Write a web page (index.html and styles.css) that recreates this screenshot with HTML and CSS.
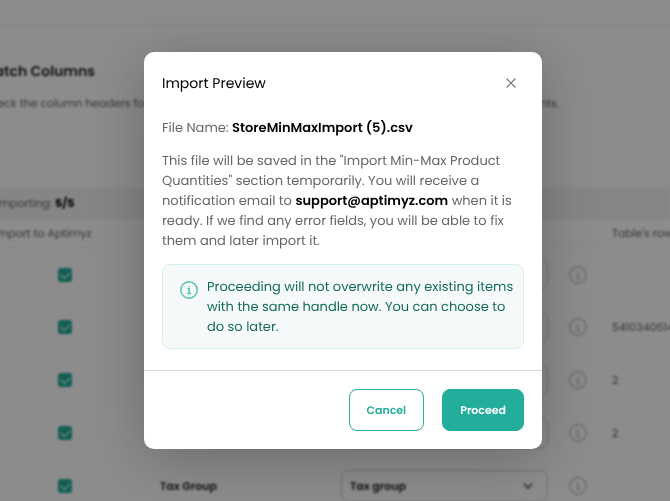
FILE: index.html
```html
<!DOCTYPE html>
<html lang="en">
<head>
  <meta charset="UTF-8">
  <meta name="viewport" content="width=device-width, initial-scale=1.0">
  <title>Import Preview</title>
  <link rel="stylesheet" href="styles.css">
</head>
<body>

  <!-- Page behind the dialog -->
  <div class="page">
    <header class="topbar"></header>

    <div class="intro">
      <h1>Match Columns</h1>
      <div class="intro-text">
        <p>Check the column headers for</p>
        <p class="intro-end">nts.</p>
      </div>
    </div>

    <p class="summary">Importing: <strong>5/5</strong></p>

    <table class="columns-table">
      <colgroup>
        <col class="col-check">
        <col class="col-name">
        <col class="col-select">
        <col class="col-info">
        <col>
      </colgroup>
      <thead>
        <tr>
          <th>Import to Aptimyz</th>
          <th></th>
          <th></th>
          <th></th>
          <th>Table's row</th>
        </tr>
      </thead>
      <tbody>
        <tr>
          <td class="center"><input type="checkbox" aria-label="Import column 1" checked></td>
          <td></td>
          <td><div class="select-wrap"><select aria-label="Match for column 1"></select></div></td>
          <td class="center"><svg class="row-info" viewBox="0 0 18 18"><use href="#info"/></svg></td>
          <td></td>
        </tr>
        <tr>
          <td class="center"><input type="checkbox" aria-label="Import column 2" checked></td>
          <td></td>
          <td><div class="select-wrap"><select aria-label="Match for column 2"></select></div></td>
          <td class="center"><svg class="row-info" viewBox="0 0 18 18"><use href="#info"/></svg></td>
          <td>5410340614</td>
        </tr>
        <tr>
          <td class="center"><input type="checkbox" aria-label="Import column 3" checked></td>
          <td></td>
          <td><div class="select-wrap"><select aria-label="Match for column 3"></select></div></td>
          <td class="center"><svg class="row-info" viewBox="0 0 18 18"><use href="#info"/></svg></td>
          <td>2</td>
        </tr>
        <tr>
          <td class="center"><input type="checkbox" aria-label="Import column 4" checked></td>
          <td></td>
          <td><div class="select-wrap"><select aria-label="Match for column 4"></select></div></td>
          <td class="center"><svg class="row-info" viewBox="0 0 18 18"><use href="#info"/></svg></td>
          <td>2</td>
        </tr>
        <tr>
          <td class="center"><input type="checkbox" aria-label="Import Tax Group" checked></td>
          <td><label class="name" for="tax-select">Tax Group</label></td>
          <td>
            <div class="select-wrap">
              <select id="tax-select">
                <option>Tax group</option>
              </select>
              <svg class="chevron" viewBox="0 0 10 10"><path d="M1 3l4 4 4-4"/></svg>
            </div>
          </td>
          <td class="center"><svg class="row-info" viewBox="0 0 18 18"><use href="#info"/></svg></td>
          <td></td>
        </tr>
      </tbody>
    </table>
  </div>

  <!-- Import preview dialog -->
  <div class="overlay">
    <div class="modal" role="dialog" aria-modal="true" aria-labelledby="modal-title">
      <div class="modal-header">
        <h2 id="modal-title">Import Preview</h2>
        <button class="close" type="button" aria-label="Close">
          <svg viewBox="0 0 10 10"><path d="M.5.5l9 9M9.5.5l-9 9"/></svg>
        </button>
      </div>

      <div class="modal-body">
        <p>File Name: <strong>StoreMinMaxImport (5).csv</strong></p>
        <p>
          This file will be saved in the "Import Min-Max Product<br>
          Quantities" section temporarily. You will receive a<br>
          notification email to <strong>support@aptimyz.com</strong> when it is<br>
          ready. If we find any error fields, you will be able to fix<br>
          them and later import it.
        </p>
        <div class="notice">
          <svg class="notice-icon" viewBox="0 0 18 18">
            <g id="info">
              <circle cx="9" cy="9" r="8.2"/>
              <path d="M7.4 7.8h1.8v4.6M7.2 12.5h4M9 5v1.3"/>
            </g>
          </svg>
          <p>
            Proceeding will not overwrite any existing items<br>
            with the same handle now. You can choose to<br>
            do so later.
          </p>
        </div>
      </div>

      <div class="modal-footer">
        <button class="btn btn-outline" type="button">Cancel</button>
        <button class="btn btn-primary" type="button">Proceed</button>
      </div>
    </div>
  </div>

</body>
</html>
```

FILE: styles.css
```css
* {
  box-sizing: border-box;
  margin: 0;
  padding: 0;
}

body {
  font-family: 'Poppins', 'Inter', sans-serif;
  font-size: 13px;
  line-height: 20px;
  text-rendering: geometricPrecision;
  color: #666;
  background-color: #fff;
  height: 100vh;
  overflow: hidden;
}

button,
select {
  font-family: inherit;
  text-rendering: inherit;
}

/* Page */
.page {
  margin-left: -18px;
  font-size: 11px;
  filter: blur(1px);
}

.topbar {
  height: 26px;
  border-bottom: 1px solid #dff5f2;
}

.intro {
  padding: 35px 0 74px;
}

.intro h1 {
  font-size: 14px;
  line-height: 20px;
  font-weight: 600;
  color: #222;
  margin-bottom: 12px;
}

.intro-text {
  display: grid;
  grid-template-columns: 558px 1fr;
}

.summary {
  background-color: #f3f3f3;
  padding: 6px 14px 7px;
}

.summary strong {
  font-weight: 700;
  color: #000;
}

.columns-table {
  width: 100%;
  table-layout: fixed;
  border-collapse: collapse;
}

.col-check {
  width: 166px;
}

.col-name {
  width: 187px;
}

.col-select {
  width: 219px;
}

.col-info {
  width: 48px;
}

.columns-table th {
  height: 27px;
  padding-left: 12px;
  font-weight: 400;
  text-align: left;
  white-space: nowrap;
  border-bottom: 1px solid #f6f6f6;
}

.columns-table td {
  height: 53px;
  padding: 0 6px 0 12px;
  vertical-align: middle;
}

.columns-table th:last-child,
.columns-table td:last-child {
  padding: 0 0 0 10px;
}

.columns-table td:nth-child(3) {
  padding: 0 6px;
}

.columns-table td.center {
  padding: 0;
  text-align: center;
}

.columns-table svg {
  vertical-align: middle;
}

input[type="checkbox"] {
  appearance: none;
  width: 14px;
  height: 14px;
  border-radius: 3px;
  background-color: #23ad9b;
  display: inline-grid;
  justify-content: center;
  padding-top: 3px;
  vertical-align: middle;
}

input[type="checkbox"]::after {
  content: "";
  width: 8px;
  height: 5px;
  border: solid #fff;
  border-width: 0 0 1px 1px;
  transform: rotate(-45deg);
}

.name {
  font-weight: 600;
  color: #222;
}

.select-wrap {
  display: grid;
  align-items: center;
}

.select-wrap select,
.select-wrap svg {
  grid-area: 1 / 1;
}

.select-wrap select {
  appearance: none;
  width: 100%;
  height: 32px;
  padding: 0 8px;
  border: 1px solid #ccc;
  border-radius: 8px;
  background-color: transparent;
  font-size: 11px;
  font-weight: 600;
  color: #222;
}

.chevron {
  width: 10px;
  height: 10px;
  margin-right: 15px;
  justify-self: end;
  fill: none;
  stroke: #777;
  stroke-width: 2;
  pointer-events: none;
}

.row-info {
  width: 18px;
  height: 18px;
  fill: none;
  stroke: #c4c4c4;
  stroke-width: 1.4;
}

/* Dialog */
.overlay {
  position: fixed;
  inset: 0;
  display: flex;
  align-items: center;
  justify-content: center;
  padding-left: 16px;
  background-color: rgba(0, 0, 0, 0.45);
}

.modal {
  width: 100%;
  max-width: 398px;
  border-radius: 10px;
  background-color: #fff;
  box-shadow: 0 10px 60px rgba(0, 0, 0, 0.25);
}

.modal-header {
  display: flex;
  align-items: center;
  justify-content: space-between;
  padding: 20px 26px 0 18px;
}

.modal-header h2 {
  font-size: 14px;
  line-height: 22px;
  font-weight: 400;
  color: #000;
}

.close {
  display: flex;
  border: none;
  background: none;
  cursor: pointer;
}

.close svg {
  width: 10px;
  height: 10px;
  fill: none;
  stroke: #777;
  stroke-width: 1.2;
}

.modal-body {
  display: flex;
  flex-direction: column;
  gap: 13px;
  padding: 24px 18px 21px;
  white-space: nowrap;
}

.modal-body strong {
  font-weight: 600;
  color: #000;
}

.notice {
  display: flex;
  gap: 9px;
  padding: 12px 17px 11px;
  border: 1px solid #d3f1ec;
  border-radius: 8px;
  background-color: #f5f9f9;
  color: #146b5c;
}

.notice-icon {
  flex: none;
  width: 18px;
  height: 18px;
  margin-top: 4px;
  fill: none;
  stroke: #4fc0b1;
  stroke-width: 1.4;
}

.modal-footer {
  display: flex;
  justify-content: flex-end;
  gap: 18px;
  padding: 18px;
  border-top: 1px solid #d9d9d9;
}

.btn {
  height: 42px;
  padding: 0 17px;
  border: 1px solid #23ad9b;
  border-radius: 8px;
  font-size: 11px;
  font-weight: 600;
  cursor: pointer;
}

.btn-outline {
  background-color: #fff;
  color: #23ad9b;
}

.btn-primary {
  background-color: #23ad9b;
  color: #fff;
}
```
